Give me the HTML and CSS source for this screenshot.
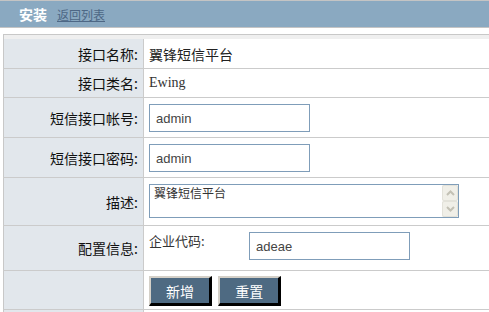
FILE: index.html
```html
<!DOCTYPE html>
<html lang="zh-CN">
<head>
    <meta charset="UTF-8">
    <title>安装</title>
    <link rel="stylesheet" href="styles.css">
</head>
<body>
    <div class="title-bar">
        <span class="title">安装</span>
        <a href="#" class="back">返回列表</a>
    </div>

    <div class="form-wrap">
        <table class="form-table">
            <tr class="spacer"><td colspan="2"></td></tr>
            <tr class="row-first">
                <th>接口名称:</th>
                <td>翼锋短信平台</td>
            </tr>
            <tr class="row-text">
                <th>接口类名:</th>
                <td class="serif">Ewing</td>
            </tr>
            <tr class="row-input">
                <th>短信接口帐号:</th>
                <td><input type="text" class="text-input" value="admin"></td>
            </tr>
            <tr class="row-input">
                <th>短信接口密码:</th>
                <td><input type="text" class="text-input" value="admin"></td>
            </tr>
            <tr class="row-area">
                <th>描述:</th>
                <td>
                    <div class="area-box">
                        <textarea class="area-text">翼锋短信平台</textarea>
                        <div class="scrollbar">
                            <span class="scroll-btn">
                                <svg width="9" height="6" viewBox="0 0 9 6"><path d="M1 5 L4.5 1.5 L8 5" fill="none" stroke="#c3c1b5" stroke-width="2"/></svg>
                            </span>
                            <span class="scroll-btn">
                                <svg width="9" height="6" viewBox="0 0 9 6"><path d="M1 1 L4.5 4.5 L8 1" fill="none" stroke="#c3c1b5" stroke-width="2"/></svg>
                            </span>
                        </div>
                    </div>
                </td>
            </tr>
            <tr class="row-config">
                <th>配置信息:</th>
                <td>
                    <div class="config-line">
                        <span class="config-label">企业代码:</span>
                        <input type="text" class="text-input" value="adeae">
                    </div>
                </td>
            </tr>
            <tr class="row-buttons">
                <th></th>
                <td>
                    <button class="btn">新增</button>
                    <button class="btn">重置</button>
                </td>
            </tr>
            <tr class="row-text">
                <th></th>
                <td></td>
            </tr>
        </table>
    </div>
</body>
</html>
```

FILE: styles.css
```css
body {
    margin: 0;
    font-family: "Noto Sans CJK SC", "Liberation Sans", sans-serif;
    font-size: 14px;
    color: #222;
    background: #fff;
}

/* 标题栏 */
.title-bar {
    height: 26px;
    border-top: 1px solid #c4c4c4;
    border-bottom: 1px solid #c4c4c4;
    background: #8aa9c1;
    display: flex;
    align-items: center;
    padding-left: 19px;
}
.title {
    color: #fff;
    font-weight: bold;
    font-size: 14px;
    margin-right: 10px;
}
.back {
    color: #4d6785;
    font-size: 12px;
    text-decoration: underline;
}

/* 表单 */
.form-wrap {
    margin-top: 6px;
    padding-left: 3px;
}
.form-table {
    width: 100%;
    border-collapse: collapse;
    border-top: 1px solid #c8c8c8;
    border-left: 1px solid #c8c8c8;
}
.form-table th,
.form-table td {
    border-bottom: 1px solid #cbcbcb;
    padding: 0;
    line-height: 16px;
}
.form-table th {
    width: 134px;
    background: #e2e7ec;
    border-right: 1px solid #cbcbcb;
    text-align: right;
    font-weight: normal;
    padding-right: 5px;
    color: #111;
}
.form-table td {
    padding-left: 5px;
    color: #222;
}
.form-table tr.spacer td {
    height: 4px;
    background: #efefef;
    border-bottom: none;
}
.row-first th,
.row-first td {
    height: 29px;
}
.row-text th,
.row-text td {
    height: 28px;
}
.form-table td.serif {
    font-family: "Liberation Serif", serif;
    color: #333;
}
.row-input td {
    padding-top: 6px;
    padding-bottom: 5px;
}
.row-area td {
    padding-top: 6px;
    padding-bottom: 7px;
}
.row-config td {
    padding-top: 6px;
    padding-bottom: 10px;
}
.row-buttons td {
    padding-top: 5px;
    padding-bottom: 3px;
}

.text-input {
    box-sizing: border-box;
    width: 161px;
    height: 28px;
    border: 1px solid #7f9db9;
    padding: 0 6px;
    font-family: "Liberation Sans", sans-serif;
    font-size: 13px;
    color: #444;
    margin: 0;
    display: block;
}

/* 描述框 */
.area-box {
    box-sizing: border-box;
    width: 310px;
    height: 34px;
    border: 1px solid #7f9db9;
    display: flex;
    background: #fff;
}
.area-text {
    flex: 1;
    border: none;
    resize: none;
    margin: 0;
    padding: 1px 4px;
    font-family: "Noto Sans CJK SC", sans-serif;
    font-size: 12px;
    line-height: 14px;
    color: #333;
    overflow: hidden;
    outline: none;
}
.scrollbar {
    width: 16px;
    display: flex;
    flex-direction: column;
    background: #f7f6f1;
}
.scroll-btn {
    box-sizing: border-box;
    height: 16px;
    border: 1px solid #e3e2da;
    border-radius: 2px;
    background: #f0efe8;
    display: flex;
    align-items: center;
    justify-content: center;
}

/* 配置信息 */
.config-line {
    display: flex;
    align-items: flex-start;
}
.config-label {
    width: 100px;
    font-size: 13px;
    color: #333;
    margin-top: 1px;
}

/* 按钮 */
.btn {
    box-sizing: border-box;
    width: 63px;
    height: 30px;
    margin: 0 3px 0 0;
    background: #4e6a82;
    color: #fff;
    font-family: "Noto Sans CJK SC", sans-serif;
    font-size: 14px;
    border-style: solid;
    border-width: 2px 3px 3px 2px;
    border-color: #d4d0c8 #000 #000 #d4d0c8;
    padding: 0;
    cursor: pointer;
}
```
